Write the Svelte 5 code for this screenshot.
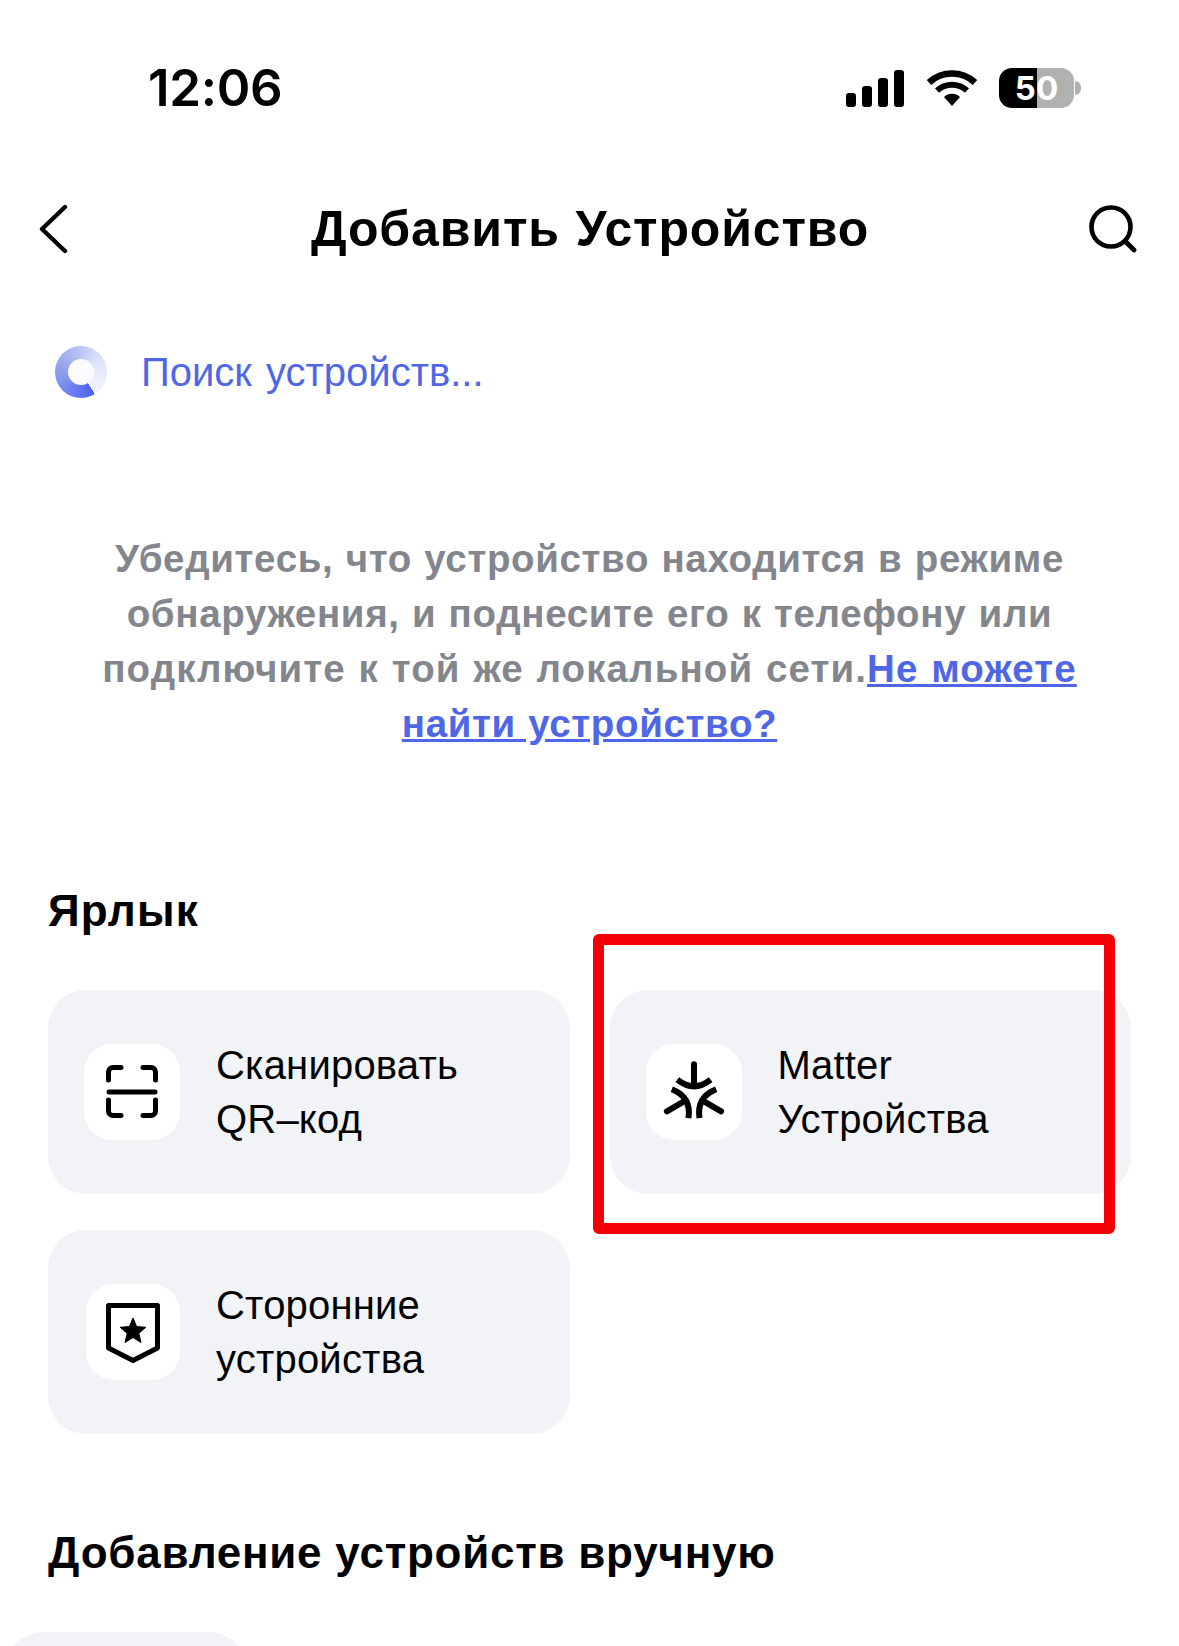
<script>
  const shortcuts = [
    { id: 'qr', lines: ['Сканировать', 'QR–код'] },
    { id: 'matter', lines: ['Matter', 'Устройства'] },
    { id: 'third', lines: ['Сторонние', 'устройства'] }
  ];
</script>

<div class="page">
  <header class="status">
    <span class="time">12:06</span>
    <div class="status-icons">
      <div class="signal"><i class="b1"></i><i class="b2"></i><i class="b3"></i><i class="b4"></i></div>
      <svg class="wifi" width="52" height="38" viewBox="0 0 52 38" aria-hidden="true">
        <path d="M3 13.500C16 1.500 36 1.500 49 13.500" fill="none" stroke="#000" stroke-width="6.500"/>
        <path d="M11 21.500C19.500 13.800 32.500 13.800 41 21.500" fill="none" stroke="#000" stroke-width="6"/>
        <path d="M18 28C22.500 23.800 29.500 23.800 34 28L26 37Z" fill="#000"/>
      </svg>
      <div class="battery"><span>50</span></div>
      <i class="nub"></i>
    </div>
  </header>

  <nav class="nav">
    <svg class="back" width="30" height="50" viewBox="0 0 30 50" aria-hidden="true">
      <path d="M26 3L3 25L26 47" fill="none" stroke="#000" stroke-width="4.400" stroke-linecap="round" stroke-linejoin="round"/>
    </svg>
    <h1>Добавить Устройство</h1>
    <svg class="search" width="48" height="48" viewBox="0 0 48 48" aria-hidden="true">
      <circle cx="22" cy="22" r="19.500" fill="none" stroke="#000" stroke-width="4.600"/>
      <path d="M36 36L45 45" stroke="#000" stroke-width="4.800" stroke-linecap="round"/>
    </svg>
  </nav>

  <div class="searching">
    <div class="spinner"></div>
    <span>Поиск устройств...</span>
  </div>

  <p class="hint">
    Убедитесь, что устройство находится в режиме<br />
    обнаружения, и поднесите его к телефону или<br />
    <span class="wide">подключите к той же локальной сети.<a href="#help">Не можете</a></span><br /><a href="#help">найти устройство?</a>
  </p>

  <h2 class="shortcut-title">Ярлык</h2>

  <div class="grid">
    {#each shortcuts as s}
      <div class="card">
        <div class="tile" class:third={s.id === 'third'}>
          {#if s.id === 'qr'}
            <svg width="96" height="96" viewBox="0 0 96 96" aria-hidden="true">
              <g fill="none" stroke="#000" stroke-width="5" stroke-linecap="round">
                <path d="M24.500 36V28a4.500 4.500 0 0 1 4.500-4.500H37"/>
                <path d="M59 23.500H67a4.500 4.500 0 0 1 4.500 4.500V36"/>
                <path d="M24.500 56V67a4.500 4.500 0 0 0 4.500 4.500H37"/>
                <path d="M59 71.500H67a4.500 4.500 0 0 0 4.500-4.500V56"/>
                <path d="M25 48H71"/>
              </g>
            </svg>
          {:else if s.id === 'matter'}
            <svg width="96" height="96" viewBox="-144 -155 288 288" aria-hidden="true">
              {#each [0, 120, 240] as r}
                <g transform="rotate({r})" fill="none" stroke="#000" stroke-width="18">
                  <path d="M0 -94V-30" stroke-linecap="round"/>
                  <path d="M-50 -48Q0 -8 50 -48"/>
                </g>
              {/each}
            </svg>
          {:else}
            <svg width="96" height="96" viewBox="0 0 96 96" aria-hidden="true">
              <path d="M24.500 21.500H73.500V64L49 76.500L24.500 64Z" fill="none" stroke="#000" stroke-width="5" stroke-linejoin="round"/>
              <path d="M49 34L52.600 42.600L61.800 43.300L54.800 49.400L57 58.500L49 53.600L41 58.500L43.200 49.400L36.200 43.300L45.400 42.600Z" fill="#000" stroke="#000" stroke-width="1" stroke-linejoin="round"/>
            </svg>
          {/if}
        </div>
        <div class="label">
          {#each s.lines as line}<div>{line}</div>{/each}
        </div>
      </div>
    {/each}
    <div class="highlight" aria-hidden="true"></div>
  </div>

  <h2 class="manual-title">Добавление устройств вручную</h2>
  <div class="manual-card"></div>
</div>

<style>
  :global(body) {
    margin: 0;
    background: #fff;
  }
  .page {
    width: 1179px;
    height: 1646px;
    overflow: hidden;
    background: #fff;
    font-family: "Liberation Sans", Arial, sans-serif;
    color: #000;
  }
  .status {
    display: flex;
    justify-content: space-between;
    align-items: center;
    height: 176px;
    padding: 0 98px 0 148px;
    box-sizing: border-box;
  }
  .time {
    font-family: Inter, "Liberation Sans", sans-serif;
    font-size: 51px;
    font-weight: 600;
    line-height: 62px;
    letter-spacing: -0.3px;
  }
  .status-icons {
    display: flex;
    align-items: center;
  }
  .signal {
    display: flex;
    align-items: flex-end;
    gap: 6px;
    height: 37px;
  }
  .signal i {
    display: block;
    width: 10px;
    border-radius: 3px;
    background: #000;
  }
  .b1 { height: 14px; }
  .b2 { height: 21px; }
  .b3 { height: 29px; }
  .b4 { height: 37px; }
  .wifi {
    margin-left: 22px;
  }
  .battery {
    width: 75px;
    height: 40px;
    margin-left: 21px;
    border-radius: 13px;
    background: linear-gradient(90deg, #000 0 51%, #b1b1b1 51%);
    display: flex;
    align-items: center;
    justify-content: center;
  }
  .battery span {
    color: #fff;
    font: 700 33px/40px Inter, "Liberation Sans", sans-serif;
  }
  .nub {
    display: block;
    width: 6px;
    height: 14px;
    margin-left: 1px;
    background: #b1b1b1;
    border-radius: 0 7px 7px 0;
  }
  .nav {
    display: grid;
    grid-template-columns: 1fr auto 1fr;
    align-items: center;
    height: 106px;
    padding: 0 42px 0 39px;
  }
  .nav .search {
    justify-self: end;
  }
  .nav h1 {
    margin: 0 0 0 4px;
    font-size: 50px;
    font-weight: 700;
    line-height: 60px;
    letter-spacing: 0.85px;
    word-spacing: 1px;
  }
  .searching {
    display: flex;
    align-items: center;
    margin-top: 64px;
    padding-left: 55px;
    height: 52px;
  }
  .spinner {
    width: 52px;
    height: 52px;
    border-radius: 50%;
    background: radial-gradient(circle, #fbfbff 0 12.5px, transparent 13.5px),
      conic-gradient(from 148deg, #4c64f6 0deg, #7d90ee 90deg, #a9b6f0 180deg, #dfe3f9 270deg, #f4f5fd 360deg);
  }
  .searching span {
    margin-left: 34px;
    font-size: 40px;
    line-height: 52px;
    color: #4f67e6;
    word-spacing: 3px;
  }
  .hint {
    margin: 133px 0 0;
    text-align: center;
    font-size: 38.5px;
    font-weight: 700;
    line-height: 55px;
    color: #84868e;
    letter-spacing: 0.65px;
    word-spacing: 1px;
  }
  .hint .wide {
    letter-spacing: 1.1px;
  }
  .hint a {
    color: #4f67e6;
    text-decoration: underline;
  }
  .shortcut-title {
    margin: 130px 0 0 48px;
    font-size: 44px;
    line-height: 60px;
    font-weight: 700;
    letter-spacing: 1.2px;
  }
  .grid {
    position: relative;
    display: grid;
    grid-template-columns: 1fr 1fr;
    gap: 36px 40px;
    margin: 49px 48px 0;
  }
  .card {
    display: flex;
    align-items: center;
    height: 204px;
    padding-left: 36px;
    border-radius: 38px;
    background: #f2f3f7;
  }
  .tile {
    flex: none;
    width: 96px;
    height: 96px;
    border-radius: 28px;
    background: #fff;
  }
  .tile.third {
    width: 94px;
    margin-left: 2px;
  }
  .tile svg {
    display: block;
  }
  .tile.third svg {
    margin-left: -2px;
  }
  .label {
    margin-left: 36px;
    font-size: 40px;
    line-height: 54px;
    letter-spacing: 0.2px;
    color: #000;
  }
  .highlight {
    position: absolute;
    left: 545px;
    top: -56px;
    width: 500px;
    height: 278px;
    border: 11px solid #f60008;
    border-radius: 6px;
  }
  .manual-title {
    margin: 89px 0 0 48px;
    font-size: 44px;
    line-height: 60px;
    font-weight: 700;
    letter-spacing: 0.75px;
  }
  .manual-card {
    width: 242px;
    height: 80px;
    margin: 49px 0 0 5px;
    border-radius: 38px 38px 0 0;
    background: #f2f3f7;
  }
</style>
